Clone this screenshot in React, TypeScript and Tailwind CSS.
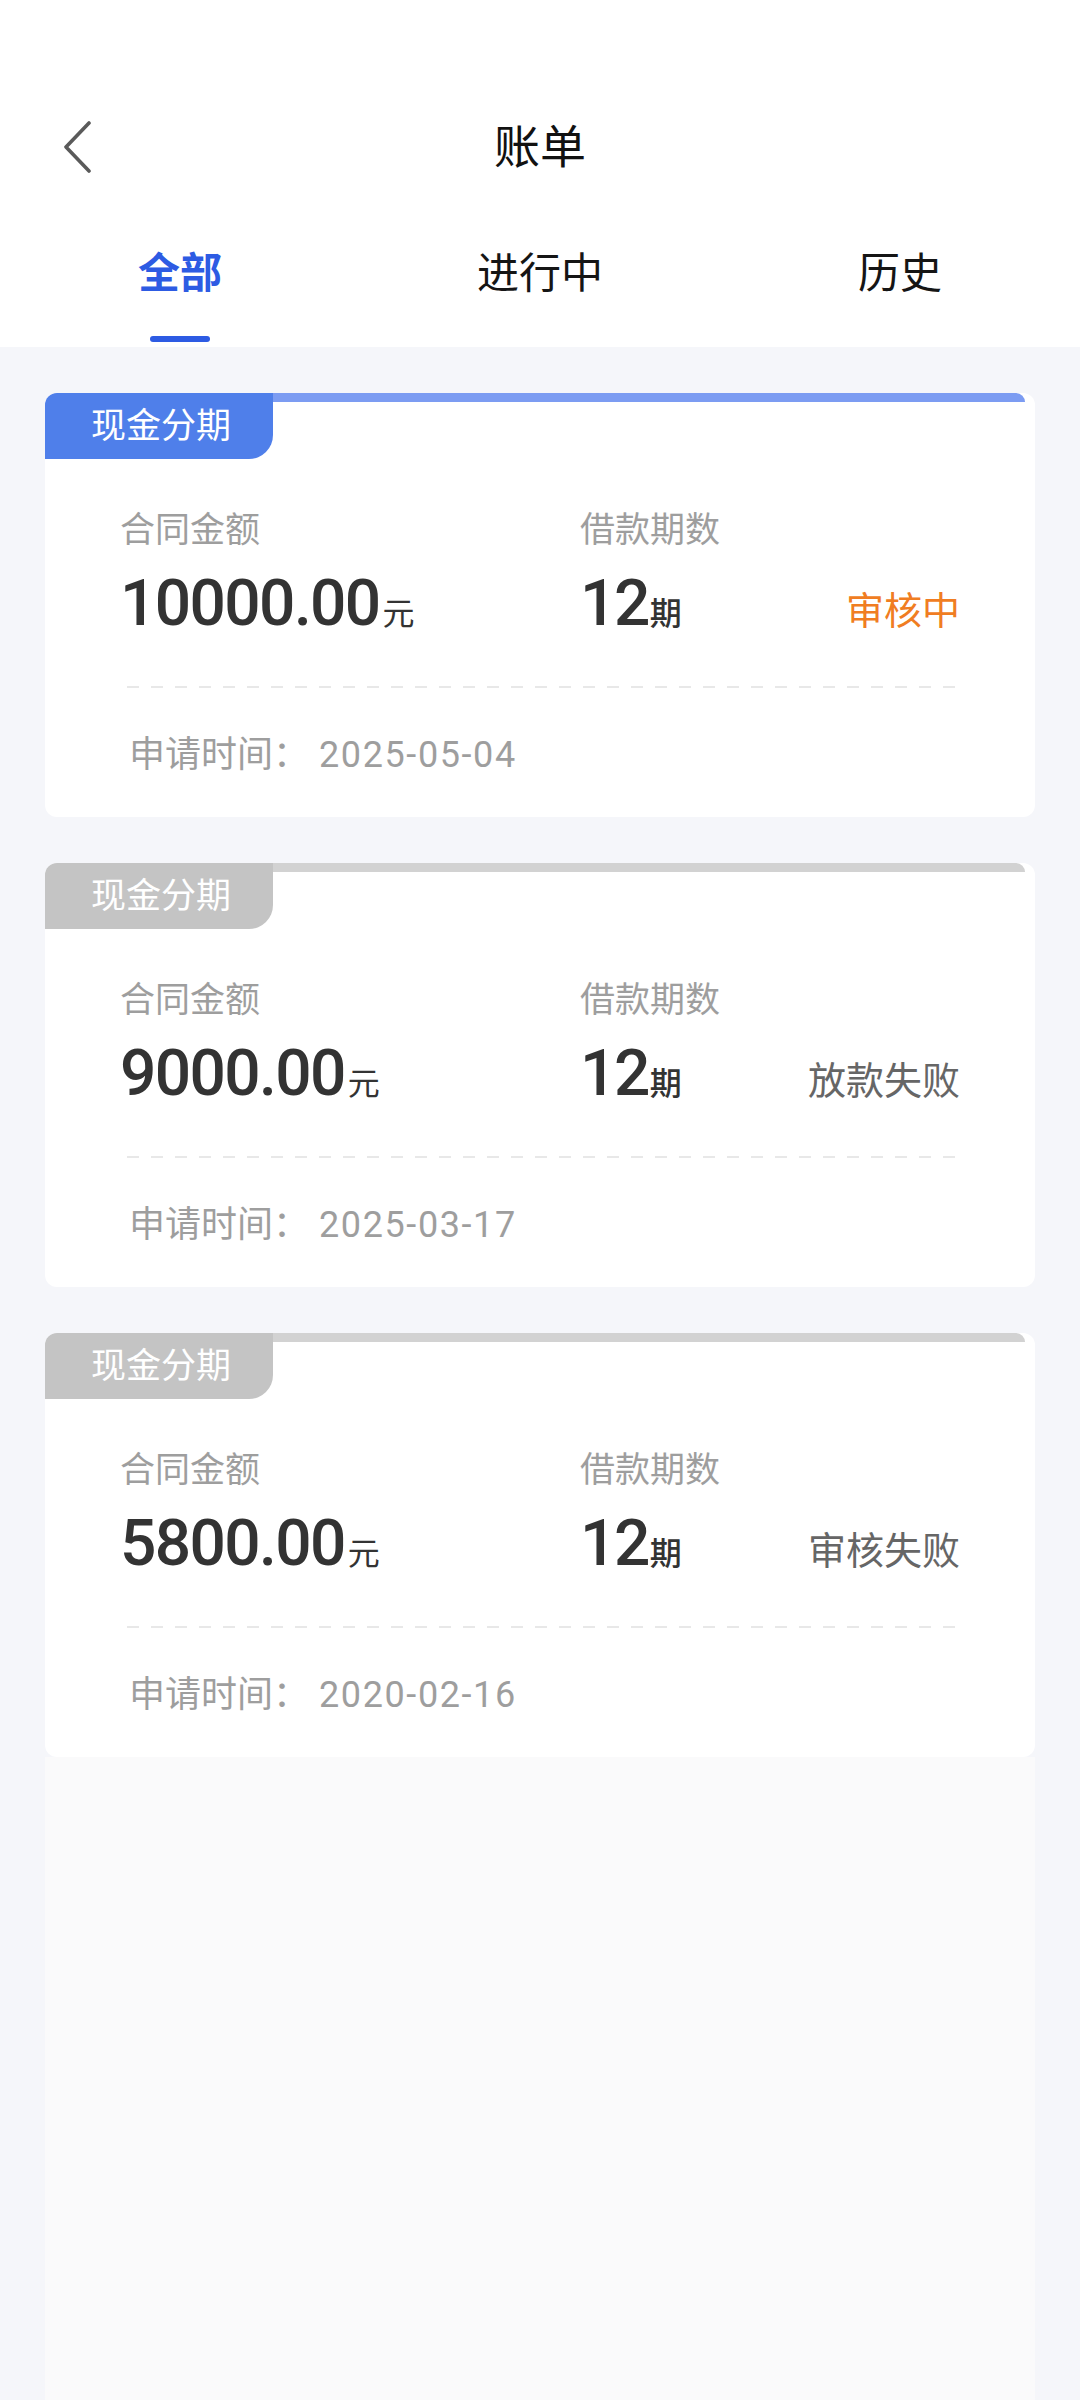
type Bill = {
  amount: string;
  periods: number;
  status: string;
  date: string;
  active: boolean;
};

const bills: Bill[] = [
  { amount: '10000.00', periods: 12, status: '审核中', date: '2025-05-04', active: true },
  { amount: '9000.00', periods: 12, status: '放款失败', date: '2025-03-17', active: false },
  { amount: '5800.00', periods: 12, status: '审核失败', date: '2020-02-16', active: false },
];

const tabs = ['全部', '进行中', '历史'];

function BackIcon() {
  return (
    <svg width="30" height="52" viewBox="0 0 30 52" fill="none">
      <path d="M26 2 L3 26 L26 50" stroke="#5A5A5A" strokeWidth="3.6" strokeLinecap="round" strokeLinejoin="round" />
    </svg>
  );
}

function BillCard({ bill }: { bill: Bill }) {
  return (
    <div className="h-[424px] overflow-hidden rounded-[12px] bg-white">
      {/* badge + top strip */}
      <div className="flex items-start">
        <div
          className={
            bill.active
              ? 'flex h-[66px] w-[228px] items-center justify-center rounded-br-[24px] bg-[#4F7FEA] pl-[4px] text-[35px] leading-none text-white'
              : 'flex h-[66px] w-[228px] items-center justify-center rounded-br-[24px] bg-[#C4C4C4] pl-[4px] text-[35px] leading-none text-white'
          }
        >
          现金分期
        </div>
        <div
          className={
            bill.active
              ? 'mr-[10px] h-[9px] flex-1 rounded-tr-[10px] bg-[#7C9CF2]'
              : 'mr-[10px] h-[9px] flex-1 rounded-tr-[10px] bg-[#D2D2D2]'
          }
        />
      </div>

      <div className="px-[75px] pt-[54px]">
        <div className="flex text-[35px] leading-none text-[#9E9E9E]">
          <div className="w-[460px]">合同金额</div>
          <div>借款期数</div>
        </div>
        <div className="mt-[24px] flex h-[64px] items-baseline">
          <div className="w-[460px] text-[#333333]">
            <span className="text-[64px] leading-none font-medium tracking-[-1.6px]">{bill.amount}</span>
            <span className="ml-[3px] text-[32px] leading-none">元</span>
          </div>
          <div className="text-[#333333]">
            <span className="text-[64px] leading-none font-medium tracking-[-2.5px]">{bill.periods}</span>
            <span className="ml-[2px] text-[32px] leading-none font-medium">期</span>
          </div>
          <div
            className={
              bill.active
                ? 'ml-auto -translate-y-[1px] text-[38px] leading-none text-[#F07D22]'
                : 'ml-auto -translate-y-[1px] text-[38px] leading-none text-[#666666]'
            }
          >
            {bill.status}
          </div>
        </div>
      </div>

      <div className="mt-[50px] mr-[78px] ml-[82px] h-[2px] bg-[repeating-linear-gradient(to_right,#E8E8E8_0_12px,transparent_12px_24px)]" />

      <div className="mt-[49px] flex items-center pl-[84px] text-[36px] leading-none text-[#9E9E9E]">
        <span>申请时间：</span>
        <span className="ml-[10px] tracking-[1.6px]">{bill.date}</span>
      </div>
    </div>
  );
}

export default function App() {
  return (
    <div className="flex h-[2400px] flex-col bg-[#F5F6FA] font-[Roboto,'Noto_Sans_CJK_SC',sans-serif]">
      <header className="bg-white">
        <div className="mt-[99px] grid h-[96px] grid-cols-[1fr_auto_1fr] items-center">
          <div className="flex pl-[63px]">
            <BackIcon />
          </div>
          <h1 className="text-[46px] leading-none text-[#111111]">账单</h1>
          <div />
        </div>
        <nav className="grid grid-cols-3 pt-[58px] pb-[5px]">
          {tabs.map((t, i) => (
            <div key={t} className="flex flex-col items-center">
              <span
                className={
                  i === 0
                    ? 'text-[42px] leading-none font-bold text-[#2D5BE3]'
                    : 'text-[42px] leading-none text-[#151515]'
                }
              >
                {t}
              </span>
              <span
                className={
                  i === 0
                    ? 'mt-[41px] h-[6px] w-[60px] rounded-full bg-[#2D5BE3]'
                    : 'mt-[41px] h-[6px] w-[60px]'
                }
              />
            </div>
          ))}
        </nav>
      </header>

      <main className="flex flex-1 flex-col px-[45px] pt-[46px]">
        <div className="flex flex-col gap-[46px]">
          {bills.map((b) => (
            <BillCard key={b.date} bill={b} />
          ))}
        </div>
        <div className="flex-1 bg-[#FAFAFB]" />
      </main>
    </div>
  );
}
